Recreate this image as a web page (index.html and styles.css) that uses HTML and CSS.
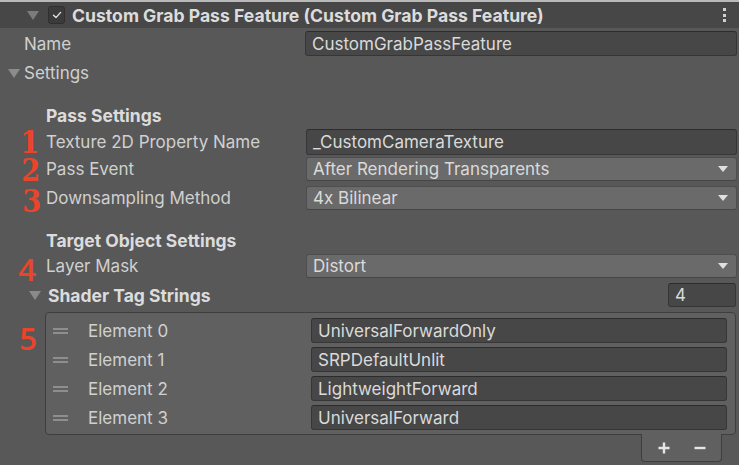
FILE: index.html
```html
<!DOCTYPE html>
<html>
<head>
<meta charset="utf-8">
<link rel="stylesheet" href="styles.css">
</head>
<body>
<div class="inspector">
  <div class="header">
    <span class="tri tri-header"></span>
    <span class="checkbox"><svg width="12" height="12" viewBox="0 0 12 12"><path d="M2.5 6.2 L5 8.6 L9.6 3.4" fill="none" stroke="#e2e2e2" stroke-width="1.4" stroke-linecap="round" stroke-linejoin="round"/></svg></span>
    <span class="header-title">Custom Grab Pass Feature (Custom Grab Pass Feature)</span>
    <span class="kebab"><i></i><i></i><i></i></span>
  </div>

  <div class="row name-row">
    <span class="label name-label">Name</span>
    <div class="field text-field">CustomGrabPassFeature</div>
  </div>

  <div class="row foldout-row">
    <span class="tri tri-settings"></span>
    <span class="label">Settings</span>
  </div>

  <div class="row section-row first-section">
    <span class="gutter"></span>
    <span class="section-title">Pass Settings</span>
  </div>

  <div class="row prop-row texture-row">
    <span class="gutter"><span class="num serif n1">1</span></span>
    <span class="label prop-label">Texture 2D Property Name</span>
    <div class="field text-field tall">_CustomCameraTexture</div>
  </div>

  <div class="row prop-row event-row">
    <span class="gutter"><span class="num serif n2">2</span></span>
    <span class="label prop-label">Pass Event</span>
    <div class="field dropdown">After Rendering Transparents<span class="arrow"></span></div>
  </div>

  <div class="row prop-row sample-row">
    <span class="gutter"><span class="num serif n3">3</span></span>
    <span class="label prop-label">Downsampling Method</span>
    <div class="field dropdown">4x Bilinear<span class="arrow"></span></div>
  </div>

  <div class="row section-row second-section">
    <span class="gutter"></span>
    <span class="section-title">Target Object Settings</span>
  </div>

  <div class="row prop-row layer-row">
    <span class="gutter"><span class="num sans n4">4</span></span>
    <span class="label prop-label">Layer Mask</span>
    <div class="field dropdown">Distort<span class="arrow"></span></div>
  </div>

  <div class="row shader-row">
    <span class="tri tri-shader"></span>
    <span class="section-title">Shader Tag Strings</span>
    <div class="field count-field">4</div>
  </div>

  <div class="list-wrap">
    <span class="list-gutter"><span class="num sans n5">5</span></span>
    <div class="list-col">
      <div class="list-box">
        <div class="list-row">
          <span class="handle"><i></i><i></i></span>
          <span class="label el-label">Element 0</span>
          <div class="field text-field el-field">UniversalForwardOnly</div>
        </div>
        <div class="list-row">
          <span class="handle"><i></i><i></i></span>
          <span class="label el-label">Element 1</span>
          <div class="field text-field el-field">SRPDefaultUnlit</div>
        </div>
        <div class="list-row">
          <span class="handle"><i></i><i></i></span>
          <span class="label el-label">Element 2</span>
          <div class="field text-field el-field">LightweightForward</div>
        </div>
        <div class="list-row">
          <span class="handle"><i></i><i></i></span>
          <span class="label el-label">Element 3</span>
          <div class="field text-field el-field">UniversalForward</div>
        </div>
      </div>
      <div class="list-footer">
        <span class="btn plus"><svg width="14" height="14" viewBox="0 0 14 14"><path d="M7 1.5 V12.5 M1.5 7 H12.5" stroke="#e6e6e6" stroke-width="2.4"/></svg></span>
        <span class="btn minus"><svg width="14" height="14" viewBox="0 0 14 14"><path d="M1.5 7 H12.5" stroke="#e6e6e6" stroke-width="2.4"/></svg></span>
      </div>
    </div>
  </div>
</div>
</body>
</html>
```

FILE: styles.css
```css
html, body {
  margin: 0;
  padding: 0;
  background: #585858;
}
body {
  width: 739px;
  height: 465px;
  overflow: hidden;
  font-family: "Inter", "Noto Sans", "Liberation Sans", sans-serif;
  font-size: 17px;
  color: #d4d4d4;
}
.inspector {
  display: flex;
  flex-direction: column;
  width: 739px;
  height: 465px;
  padding-right: 2px;
  box-sizing: border-box;
}

/* header */
.header {
  display: flex;
  align-items: center;
  height: 26px;
  border-top: 2px solid #b9b9b9;
  background: #474747;
  margin-right: -2px;
}
.tri {
  width: 0;
  height: 0;
  border-left: 6px solid transparent;
  border-right: 6px solid transparent;
  border-top: 9px solid #8a8a8a;
  flex: none;
}
.tri-header {
  margin-left: 27px;
  border-top-color: #7c7c7c;
}
.checkbox {
  width: 15px;
  height: 16px;
  margin-left: 9px;
  background: #3b3b3b;
  border: 1px solid #2f2f2f;
  border-radius: 3px;
  display: flex;
  align-items: center;
  justify-content: center;
  flex: none;
}
.header-title {
  margin-left: 7px;
  font-weight: 700;
  font-size: 17.6px;
  color: #dcdcdc;
  white-space: nowrap;
}
.kebab {
  margin-left: auto;
  margin-right: 13px;
  display: flex;
  flex-direction: column;
  gap: 2.5px;
}
.kebab i {
  display: block;
  width: 3px;
  height: 3px;
  background: #d0d0d0;
}

/* rows */
.row {
  display: flex;
  align-items: center;
  flex: none;
}
.label {
  white-space: nowrap;
  color: #d0d0d0;
}
.field {
  flex: 1;
  box-sizing: border-box;
  border-radius: 3px;
  padding-left: 6px;
  display: flex;
  align-items: center;
  white-space: nowrap;
  color: #dadada;
  position: relative;
}
.text-field {
  background: #474747;
  border: 1px solid #363636;
  border-top-color: #2c2c2c;
  height: 25px;
}
.text-field.tall {
  height: 26px;
}
.dropdown {
  background: #6a6a6a;
  border: 1px solid #4e4e4e;
  border-bottom-color: #464646;
  height: 24px;
}
.arrow {
  margin-left: auto;
  margin-right: 8px;
  width: 0;
  height: 0;
  border-left: 5px solid transparent;
  border-right: 5px solid transparent;
  border-top: 6px solid #e0e0e0;
}

.name-row {
  height: 29px;
  margin-top: 1px;
}
.name-label {
  width: 281px;
  padding-left: 24px;
  flex: none;
}
.foldout-row {
  height: 30px;
}
.tri-settings {
  margin-left: 8px;
  margin-right: 4px;
  border-top-color: #8c8c8c;
}
.gutter {
  width: 46px;
  flex: none;
  display: flex;
  justify-content: flex-end;
  align-items: center;
  height: 100%;
}
.section-title {
  font-weight: 700;
  font-size: 17.5px;
  color: #dcdcdc;
  white-space: nowrap;
}
.first-section {
  height: 25px;
  margin-top: 15px;
}
.second-section {
  height: 26px;
  margin-top: 15px;
}
.prop-label {
  width: 260px;
  flex: none;
}
.texture-row { height: 27px; }
.event-row { height: 28px; }
.sample-row { height: 29px; }
.layer-row { height: 26px; }

.num {
  color: #e9452b;
  line-height: 0.72;
  display: block;
}
.serif {
  font-family: "DejaVu Serif", "Liberation Serif", serif;
  font-weight: 700;
  font-size: 31px;
  margin-right: 4px;
  transform: scaleX(0.88);
}
.sans {
  font-family: "Open Sans", "Liberation Sans", sans-serif;
  font-weight: 600;
  font-size: 31px;
  margin-right: 9px;
}
.n1 { margin-top: 2px; margin-right: 5px; }
.n2 { margin-right: 4px; margin-top: 3px; }
.n3 { margin-right: 3px; margin-top: 7px; }
.n4 { margin-top: 6px; margin-right: 10px; }

.shader-row {
  height: 28px;
  margin-top: 2px;
}
.tri-shader {
  margin-left: 29px;
  margin-right: 7px;
  border-top-color: #8a8a8a;
}
.count-field {
  flex: none;
  width: 68px;
  margin-left: auto;
  margin-right: 1px;
  height: 24px;
  background: #474747;
  border: 1px solid #363636;
  border-top-color: #2c2c2c;
}

/* list */
.list-wrap {
  display: flex;
  margin-top: 3px;
}
.list-gutter {
  width: 45px;
  flex: none;
  display: flex;
  justify-content: flex-end;
  align-items: flex-start;
}
.n5 {
  margin-top: 15px;
  margin-right: 8px;
}
.list-col {
  flex: 1;
  display: flex;
  flex-direction: column;
  margin-right: 1px;
}
.list-box {
  background: #606060;
  border: 1px solid #3e3e3e;
  border-radius: 4px;
  padding: 3px 8px 2px 7px;
}
.list-row {
  display: flex;
  align-items: center;
  height: 29px;
}
.handle {
  width: 15px;
  flex: none;
  display: flex;
  flex-direction: column;
  gap: 2px;
}
.handle i {
  display: block;
  height: 2px;
  background: #8e8e8e;
}
.el-label {
  width: 223px;
  margin-left: 20px;
  flex: none;
}
.el-field {
  height: 25px;
}
.list-footer {
  align-self: flex-end;
  width: 81px;
  height: 28px;
  box-sizing: border-box;
  margin-top: -1px;
  margin-right: 14px;
  background: #606060;
  border: 1px solid #3e3e3e;
  border-top: none;
  border-radius: 0 0 4px 4px;
  display: flex;
  align-items: center;
  justify-content: center;
  gap: 22px;
  position: relative;
  z-index: 1;
}
.btn {
  display: flex;
}
```
